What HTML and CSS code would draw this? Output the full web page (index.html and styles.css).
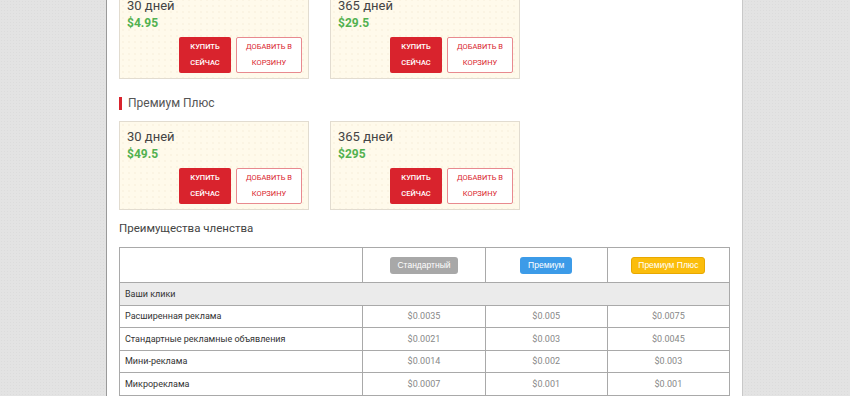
FILE: index.html
```html
<!DOCTYPE html>
<html lang="ru">
<head>
    <meta charset="UTF-8">
    <meta name="viewport" content="width=device-width, initial-scale=1.0">
    <title>Членство</title>
    <link rel="stylesheet" href="styles.css">
</head>
<body>
    <div class="page">
        <div class="plan-cards first-row">
            <div class="plan-card">
                <div class="plan-term">30 дней</div>
                <div class="plan-price">$4.95</div>
                <div class="plan-actions">
                    <button class="btn-buy">Купить сейчас</button>
                    <button class="btn-cart">Добавить в корзину</button>
                </div>
            </div>
            <div class="plan-card">
                <div class="plan-term">365 дней</div>
                <div class="plan-price">$29.5</div>
                <div class="plan-actions">
                    <button class="btn-buy">Купить сейчас</button>
                    <button class="btn-cart">Добавить в корзину</button>
                </div>
            </div>
        </div>

        <h3 class="plan-title">Премиум Плюс</h3>
        <div class="plan-cards">
            <div class="plan-card">
                <div class="plan-term">30 дней</div>
                <div class="plan-price">$49.5</div>
                <div class="plan-actions">
                    <button class="btn-buy">Купить сейчас</button>
                    <button class="btn-cart">Добавить в корзину</button>
                </div>
            </div>
            <div class="plan-card">
                <div class="plan-term">365 дней</div>
                <div class="plan-price">$295</div>
                <div class="plan-actions">
                    <button class="btn-buy">Купить сейчас</button>
                    <button class="btn-cart">Добавить в корзину</button>
                </div>
            </div>
        </div>

        <h3 class="section-title">Преимущества членства</h3>
        <table class="benefits">
            <colgroup>
                <col class="col-name">
                <col class="col-plan">
                <col class="col-plan">
                <col class="col-plan">
            </colgroup>
            <tr class="head-row">
                <td></td>
                <td><span class="badge badge-standard">Стандартный</span></td>
                <td><span class="badge badge-premium">Премиум</span></td>
                <td><span class="badge badge-plus">Премиум Плюс</span></td>
            </tr>
            <tr class="group-row">
                <td colspan="4">Ваши клики</td>
            </tr>
            <tr>
                <td>Расширенная реклама</td>
                <td>$0.0035</td>
                <td>$0.005</td>
                <td>$0.0075</td>
            </tr>
            <tr>
                <td>Стандартные рекламные объявления</td>
                <td>$0.0021</td>
                <td>$0.003</td>
                <td>$0.0045</td>
            </tr>
            <tr>
                <td>Мини-реклама</td>
                <td>$0.0014</td>
                <td>$0.002</td>
                <td>$0.003</td>
            </tr>
            <tr>
                <td>Микрореклама</td>
                <td>$0.0007</td>
                <td>$0.001</td>
                <td>$0.001</td>
            </tr>
        </table>
    </div>
</body>
</html>
```

FILE: styles.css
```css
body {
    font-family: Roboto, "Liberation Sans", Arial, sans-serif;
    background-color: #e3e3e3;
    background-image: radial-gradient(rgba(0, 0, 0, 0.03) 1px, transparent 1px);
    background-size: 3px 3px;
    margin: 0;
    padding: 0;
    height: 396px;
    overflow: hidden;
}

.page {
    width: 611px;
    margin-left: 106px;
    padding: 0 12px 20px 12px;
    background-color: #fff;
    border-left: 1px solid #9a9a9a;
    border-right: 1px solid #c8c8c8;
    min-height: 420px;
}

.plan-cards {
    display: flex;
    gap: 21px;
}

.first-row {
    margin-top: -10px;
}

.plan-card {
    width: 175px;
    padding: 6px 6px 5px 7px;
    background-color: #fffaeb;
    background-image: radial-gradient(rgba(200, 170, 120, 0.07) 1px, transparent 1px);
    background-size: 6px 6px;
    border: 1px solid #e2dcd0;
}

.plan-term {
    font-size: 13px;
    line-height: 18px;
    color: #444;
}

.plan-price {
    font-size: 12px;
    font-weight: bold;
    line-height: 17px;
    color: #52b150;
}

.plan-actions {
    display: flex;
    justify-content: flex-end;
    gap: 5px;
    margin-top: 5px;
}

.plan-actions button {
    height: 36px;
    padding: 0 4px;
    font-family: inherit;
    font-size: 7.5px;
    line-height: 16px;
    text-transform: uppercase;
    border-radius: 2px;
    cursor: pointer;
}

.btn-buy {
    width: 52px;
    background-color: #d9232d;
    color: #fff;
    border: none;
    font-weight: 500;
}

.btn-cart {
    width: 66px;
    background-color: #fff;
    color: #d9232d;
    border: 1px solid #e88a8f;
}

.plan-title {
    margin: 18px 0 11px;
    padding-left: 6px;
    border-left: 3px solid #d9232d;
    font-size: 12px;
    font-weight: normal;
    line-height: 13px;
    color: #555;
}

.section-title {
    margin: 11px 0 12px;
    font-size: 11.5px;
    font-weight: normal;
    line-height: 14px;
    color: #444;
}

.benefits {
    width: 611px;
    table-layout: fixed;
    border-collapse: collapse;
    border: 1px solid #c4c4c4;
    font-size: 9px;
    color: #333;
}

.col-name {
    width: 243px;
}

.col-plan {
    width: 122px;
}

.benefits td {
    border: 1px solid #a9a9a9;
    height: 21.5px;
    padding: 0 5px;
    text-align: center;
    color: #888;
}

.benefits td:first-child {
    text-align: left;
    color: #333;
}

.benefits .head-row td {
    height: 34px;
}

.benefits .group-row td {
    background-color: #ebebeb;
    color: #333;
}

.badge {
    display: inline-block;
    padding: 0 6px;
    line-height: 17px;
    font-family: "Liberation Sans", Arial, sans-serif;
    font-size: 8.5px;
    color: #fff;
    border-radius: 3px;
}

.badge-standard {
    background-color: #a8a8a8;
    padding: 0 7px;
}

.badge-premium {
    background-color: #3c9be8;
    padding: 0 8px;
}

.badge-plus {
    background-color: #fbbd0c;
    border: 1px solid #e8a800;
    line-height: 15px;
}
```
